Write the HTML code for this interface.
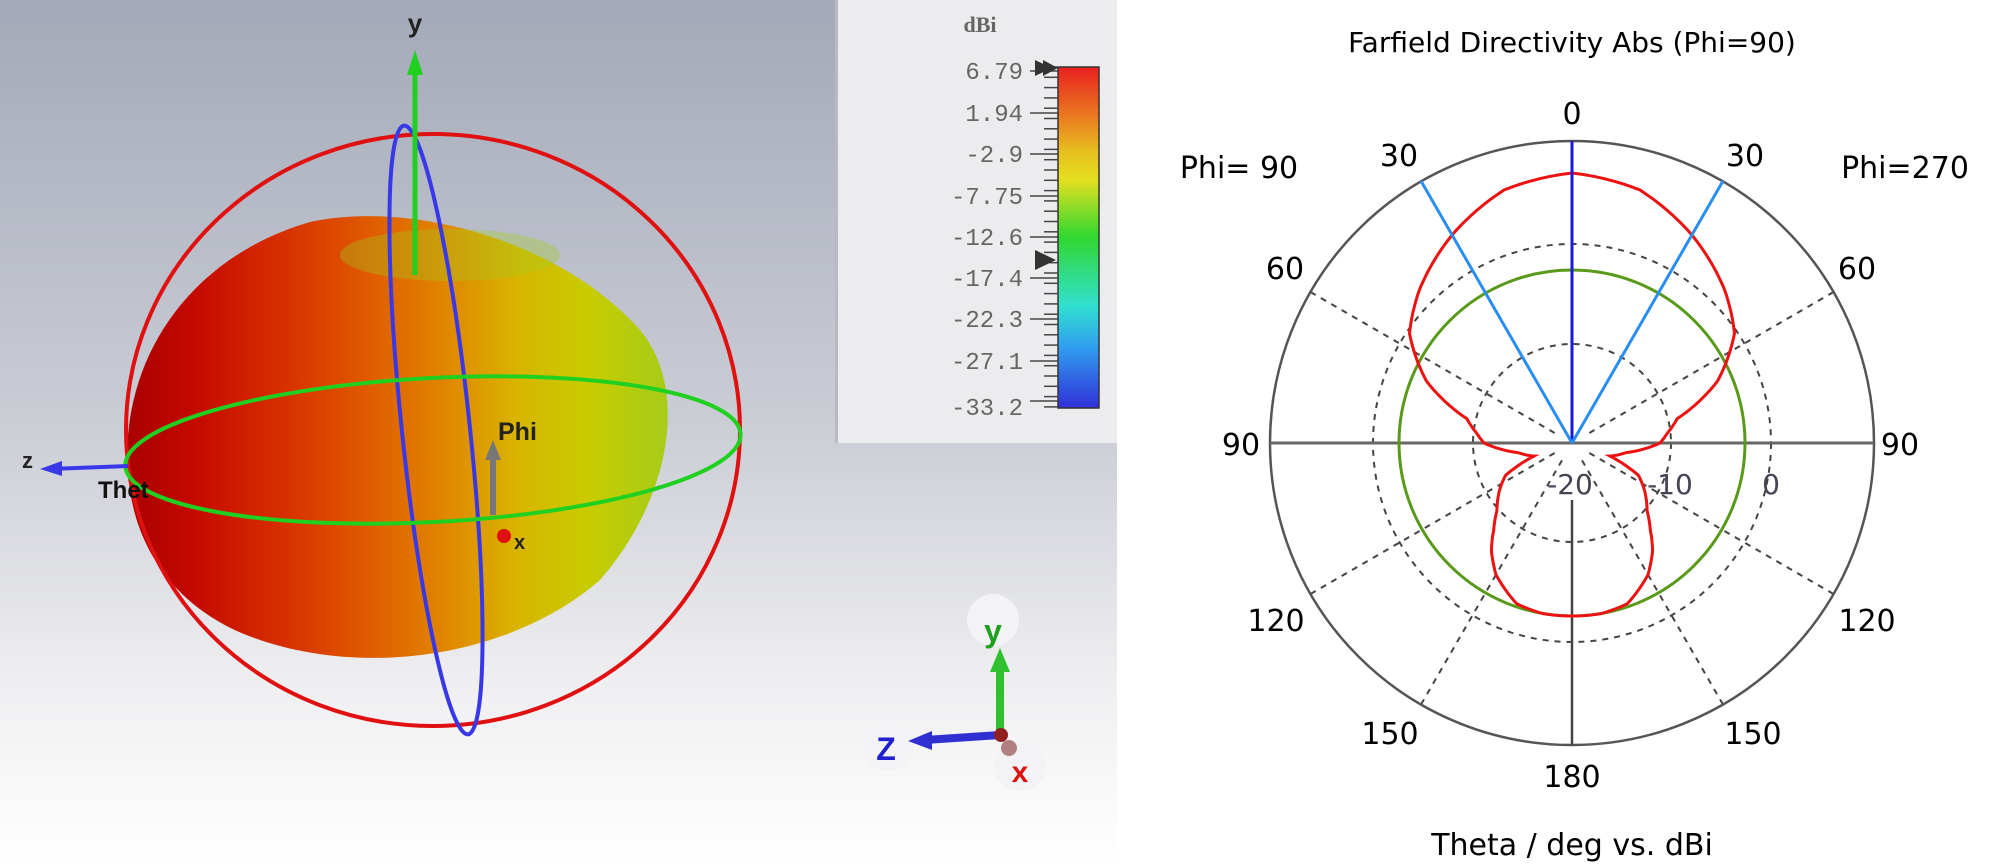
<!DOCTYPE html>
<html><head><meta charset="utf-8"><style>
html,body{margin:0;padding:0;background:#fff;}
body{width:2000px;height:865px;overflow:hidden;position:relative;font-family:"Liberation Sans",sans-serif;}
svg{position:absolute;left:0;top:0;}
</style></head><body>
<svg width="2000" height="865" viewBox="0 0 2000 865" xmlns="http://www.w3.org/2000/svg">
<defs>
<linearGradient id="bg" x1="0" y1="0" x2="0" y2="1">
<stop offset="0" stop-color="#a3a9b8"/><stop offset="0.5" stop-color="#ccced6"/><stop offset="0.8" stop-color="#f0f0f2"/><stop offset="1" stop-color="#ffffff"/>
</linearGradient>
<linearGradient id="blob" x1="0" y1="0" x2="1" y2="0">
<stop offset="0" stop-color="#a80000"/><stop offset="0.12" stop-color="#c40800"/><stop offset="0.3" stop-color="#d83200"/><stop offset="0.45" stop-color="#e05c00"/><stop offset="0.6" stop-color="#e08a00"/><stop offset="0.72" stop-color="#d8b400"/><stop offset="0.85" stop-color="#c8cc00"/><stop offset="1" stop-color="#a6cc18"/>
</linearGradient>
<linearGradient id="cb" x1="0" y1="0" x2="0" y2="1">
<stop offset="0" stop-color="#e82020"/><stop offset="0.12" stop-color="#ea6a20"/><stop offset="0.25" stop-color="#e8c020"/><stop offset="0.33" stop-color="#e4e020"/><stop offset="0.5" stop-color="#30d830"/><stop offset="0.7" stop-color="#30e0d0"/><stop offset="0.82" stop-color="#30a0f0"/><stop offset="1" stop-color="#3030d8"/>
</linearGradient>
</defs>
<rect x="0" y="0" width="1117" height="865" fill="url(#bg)"/>
<rect x="835" y="0" width="282" height="443" fill="#ececef"/>
<rect x="835" y="0" width="3" height="443" fill="#b6bac4"/>
<text x="980" y="32" font-family="Liberation Serif,serif" font-size="22" font-weight="bold" fill="#666" text-anchor="middle">dBi</text>
<rect x="1058" y="67" width="41" height="341" fill="url(#cb)" stroke="#333" stroke-width="1.5"/>
<g font-family="Liberation Mono,monospace" font-size="24" fill="#666" text-anchor="end">
<text x="1023" y="79">6.79</text><text x="1023" y="121">1.94</text><text x="1023" y="162">-2.9</text><text x="1023" y="204">-7.75</text><text x="1023" y="245">-12.6</text><text x="1023" y="286">-17.4</text><text x="1023" y="327">-22.3</text><text x="1023" y="369">-27.1</text><text x="1023" y="415">-33.2</text>
</g>
<g stroke="#444" stroke-width="1.5" id="ticks"></g>
<polygon points="1035,60 1052,68 1035,76" fill="#333"/><polygon points="1043,60 1058,68 1043,76" fill="#333"/>
<polygon points="1035,250 1056,260 1035,270" fill="#333"/>
<path d="M128,472 C120,370 180,260 310,222 C410,200 560,240 640,330 C690,390 670,500 600,580 C520,650 380,680 260,640 C170,610 132,540 128,472 Z" fill="url(#blob)"/>
<ellipse cx="450" cy="255" rx="110" ry="26" fill="#a0cc20" opacity="0.35"/>
<ellipse cx="433" cy="430" rx="307" ry="296" fill="none" stroke="#e01010" stroke-width="4"/>
<ellipse cx="436" cy="430" rx="34" ry="306" transform="rotate(-6 436 430)" fill="none" stroke="#3838e8" stroke-width="4"/>
<ellipse cx="433" cy="450" rx="308" ry="72" transform="rotate(-3 433 450)" fill="none" stroke="#20d020" stroke-width="4"/>
<line x1="415" y1="275" x2="415" y2="62" stroke="#20d020" stroke-width="5"/>
<polygon points="407,75 415,50 423,75" fill="#20d020"/>
<text x="415" y="32" font-size="26" font-weight="bold" text-anchor="middle" fill="#222">y</text>
<line x1="128" y1="466" x2="50" y2="469" stroke="#3838e8" stroke-width="4"/>
<polygon points="62,461 40,469 62,476" fill="#3838e8"/>
<text x="22" y="468" font-size="22" font-weight="bold" fill="#222">z</text>
<text x="98" y="498" font-size="24" font-weight="bold" fill="#111">Thet</text>
<text x="498" y="440" font-size="25" font-weight="bold" fill="#222">Phi</text>
<line x1="493" y1="515" x2="493" y2="455" stroke="#777" stroke-width="6"/>
<polygon points="485,460 493,440 501,460" fill="#777"/>
<circle cx="504" cy="536" r="7" fill="#e01010"/>
<text x="514" y="549" font-size="20" font-weight="bold" fill="#222">x</text>
<circle cx="993" cy="620" r="26" fill="#f3f3f5"/><circle cx="888" cy="745" r="26" fill="#f3f3f5"/><circle cx="1020" cy="765" r="26" fill="#f3f3f5"/>
<line x1="1000" y1="735" x2="1000" y2="665" stroke="#30c030" stroke-width="8"/>
<polygon points="990,672 1000,648 1010,672" fill="#30c030"/>
<line x1="1000" y1="735" x2="925" y2="740" stroke="#3030d0" stroke-width="8"/>
<polygon points="932,731 908,741 932,750" fill="#3030d0"/>
<circle cx="1001" cy="735" r="7" fill="#902020"/><circle cx="1009" cy="748" r="8" fill="#b08080"/>
<text x="993" y="642" font-size="32" font-weight="bold" text-anchor="middle" fill="#20a020">y</text>
<text x="886" y="760" font-size="32" font-weight="bold" text-anchor="middle" fill="#2020d0">Z</text>
<text x="1020" y="782" font-size="30" font-weight="bold" text-anchor="middle" fill="#e01010">x</text>
<g font-family="'DejaVu Sans','Liberation Sans',sans-serif" fill="#000">
<text x="1572" y="52" font-size="28" text-anchor="middle">Farfield Directivity Abs (Phi=90)</text>
<g font-size="30" text-anchor="middle">
<text x="1572" y="124">0</text>
<text x="1399" y="166">30</text><text x="1745" y="166">30</text>
<text x="1239" y="178">Phi= 90</text><text x="1905" y="178">Phi=270</text>
<text x="1285" y="279">60</text><text x="1857" y="279">60</text>
<text x="1241" y="455">90</text><text x="1900" y="455">90</text>
<text x="1276" y="631">120</text><text x="1867" y="631">120</text>
<text x="1390" y="744">150</text><text x="1753" y="744">150</text>
<text x="1572" y="787">180</text>
<text x="1572" y="855">Theta / deg vs. dBi</text>
</g>
<g font-size="28" text-anchor="middle" fill="#445">
<text x="1570" y="494">-20</text><text x="1670" y="494">-10</text><text x="1771" y="494">0</text>
</g>
</g>
<g fill="none" stroke="#444" stroke-width="2" stroke-dasharray="6,6" id="spokes"></g>
<circle cx="1572" cy="443" r="99" fill="none" stroke="#444" stroke-width="2" stroke-dasharray="6,6"/>
<circle cx="1572" cy="443" r="199" fill="none" stroke="#444" stroke-width="2" stroke-dasharray="6,6"/>
<circle cx="1572" cy="443" r="302" fill="none" stroke="#555" stroke-width="2.5"/>
<line x1="1270" y1="443" x2="1874" y2="443" stroke="#666" stroke-width="3"/>
<line x1="1572" y1="500" x2="1572" y2="745" stroke="#444" stroke-width="2.5"/>
<circle cx="1572" cy="443" r="173" fill="none" stroke="#5a9a1a" stroke-width="3"/>
<path id="red" fill="none" stroke="#ee1111" stroke-width="3"/>
<line x1="1572" y1="443" x2="1572" y2="141" stroke="#1a1adc" stroke-width="3"/>
<line x1="1572" y1="443" x2="1421" y2="181" stroke="#2a8ef0" stroke-width="3"/>
<line x1="1572" y1="443" x2="1723" y2="181" stroke="#2a8ef0" stroke-width="3"/>
</svg>
<script>
(function(){
var ns="http://www.w3.org/2000/svg";
var t=document.getElementById('ticks');
for(var y=67;y<=408;y+=10.3){var l=document.createElementNS(ns,'line');l.setAttribute('x1',1044);l.setAttribute('x2',1058);l.setAttribute('y1',y);l.setAttribute('y2',y);t.appendChild(l);}
[78,120,161,203,244,285,326,368,408].forEach(function(y){var l=document.createElementNS(ns,'line');l.setAttribute('x1',1030);l.setAttribute('x2',1058);l.setAttribute('y1',y-7);l.setAttribute('y2',y-7);t.appendChild(l);});
var s=document.getElementById('spokes');var cx=1572,cy=443;
[30,60,120,150,210,240,300,330].forEach(function(a){var r=a*Math.PI/180;var l=document.createElementNS(ns,'line');l.setAttribute('x1',cx+20*Math.sin(r));l.setAttribute('y1',cy-20*Math.cos(r));l.setAttribute('x2',cx+302*Math.sin(r));l.setAttribute('y2',cy-302*Math.cos(r));s.appendChild(l);});
var tb=[[0,270],[15,262],[30,240],[45,216],[56,196],[67,158],[77,108],[84,96],[90,88],[100,55],[109,40],[116,74],[124,88],[132,101],[138,117],[143,134],[150,152],[161,170],[170,173],[180,173]];
function rr(a){for(var i=0;i<tb.length-1;i++){if(a>=tb[i][0]&&a<=tb[i+1][0]){var f=(a-tb[i][0])/(tb[i+1][0]-tb[i][0]);return tb[i][1]+f*(tb[i+1][1]-tb[i][1]);}}return 173;}
var pts=[];for(var a=0;a<=360;a+=1){var b=a<=180?a:360-a;var r=rr(b);var th=a*Math.PI/180;pts.push((cx+r*Math.sin(th)).toFixed(1)+","+(cy-r*Math.cos(th)).toFixed(1));}
document.getElementById('red').setAttribute('d',"M"+pts.join(" L")+" Z");
})();
</script>
</body></html>
